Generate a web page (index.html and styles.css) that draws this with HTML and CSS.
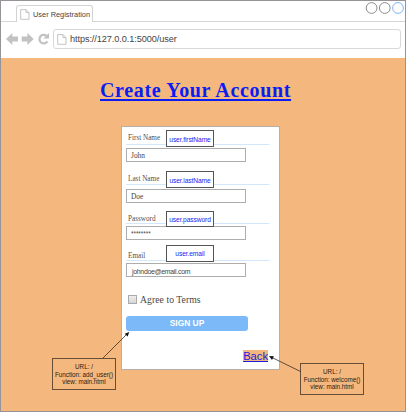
FILE: index.html
```html
<!DOCTYPE html>
<html lang="en">
<head>
<meta charset="utf-8">
<title>User Registration</title>
<link rel="stylesheet" href="styles.css">
</head>
<body>
<div class="window">
  <header class="chrome">
    <div class="tabs">
      <div class="tab">
        <svg class="doc" width="10" height="11" viewBox="0 0 10 11"><path d="M.7.6H6L9 3.6V10.3H.7ZM6 .6V3.6H9"/></svg>
        <span class="tab-title">User Registration</span>
      </div>
      <svg class="controls" width="40" height="14" viewBox="0 0 40 14"><circle cx="6.6" cy="7" r="5.4"/><circle cx="19.8" cy="7" r="5.4"/><circle class="active" cx="33" cy="7" r="5.4"/></svg>
    </div>
    <div class="toolbar">
      <svg class="nav" width="46" height="14" viewBox="0 0 46 14">
        <path d="M0 7L6.3 1V4.5H12V9.5H6.3V13Z"/>
        <path d="M27.7 7L21.4 1V4.5H15.7V9.5H21.4V13Z"/>
        <path class="reload" d="M41.4 9.4A4.3 4.3 0 1 1 40.6 3.9"/>
        <path d="M43 1V6.6H37.4Z"/>
      </svg>
      <div class="address">
        <svg class="doc" width="10" height="11" viewBox="0 0 10 11"><path d="M.7.6H6L9 3.6V10.3H.7ZM6 .6V3.6H9"/></svg>
        <span class="url">https://127.0.0.1:5000/user</span>
      </div>
    </div>
  </header>
  <main class="page">
    <h1><span class="heading">Create Your Account</span></h1>
    <form class="card">
      <div class="field">
        <div class="row"><label>First Name</label><span class="tag">user.firstName</span></div>
        <div class="input">John</div>
      </div>
      <div class="field last-name">
        <div class="row"><label>Last Name</label><span class="tag">user.lastName</span></div>
        <div class="input">Doe</div>
      </div>
      <div class="field password">
        <div class="row"><label>Password</label><span class="tag">user.password</span></div>
        <div class="input">********</div>
      </div>
      <div class="field email">
        <div class="row"><label>Email</label><span class="tag">user.email</span></div>
        <div class="input">johndoe@email.com</div>
      </div>
      <div class="terms"><span class="check"></span><span class="terms-text">Agree to Terms</span></div>
      <div class="submit">SIGN UP</div>
      <a class="back">Back</a>
    </form>
  </main>
  <div class="note note-signup">URL: /<br>Function: add_user()<br>view: main.html</div>
  <div class="note note-back">URL: /<br>Function: welcome()<br>view: main.html</div>
  <svg class="arrows" width="406" height="412" viewBox="0 0 406 412">
    <path class="line" d="M103 358L127 334M300.5 371.5L272 357.5"/>
    <path d="M129.3 332L127.6 336.6L124.7 333.7ZM269 356L273.9 356.2L272 359.9Z"/>
  </svg>
</div>
</body>
</html>
```
FILE: styles.css
```css
* { box-sizing: border-box; }
body { margin: 0; font-family: "Liberation Sans", Arial, sans-serif; }
.window {
  position: relative;
  width: 406px;
  height: 412px;
  overflow: hidden;
  border: 1px solid #969298;
  background: #f4b77d;
}
.chrome { height: 57px; background: #fff; }
.tabs {
  display: flex;
  justify-content: space-between;
  height: 21px;
  border-bottom: 1px solid #d6d6d6;
}
.tab {
  display: flex;
  align-items: center;
  width: 77px;
  height: 17px;
  margin: 4px 0 0 15px;
  padding-left: 3px;
  border: 1px solid #d3d3d3;
  border-bottom: 0;
  border-radius: 3px 3px 0 0;
  background: #fff;
}
.tab-title { margin-left: 3px; font-size: 7.4px; white-space: nowrap; color: #444; }
.doc { flex: none; fill: none; stroke: #bdbdbd; stroke-width: .9; }
.controls { fill: none; stroke: #8e8e8e; stroke-width: 1; }
.controls .active { stroke: #7fb5fa; }
.toolbar { display: flex; align-items: center; height: 36px; padding: 0 4px 2px 5px; }
.nav { flex: none; fill: #c2c2c2; }
.nav .reload { fill: none; stroke: #c2c2c2; stroke-width: 2.2; }
.address {
  display: flex;
  flex: 1;
  align-items: center;
  height: 20px;
  margin-left: 1px;
  padding-left: 3px;
  border: 1px solid #d8d8d8;
  border-radius: 3px;
}
.url { margin-left: 3px; font-size: 9.2px; letter-spacing: -.1px; color: #444; }
.page { display: flex; flex-direction: column; }
h1 {
  display: flex;
  height: 68px;
  margin: 0;
  padding: 19px 0 0 99px;
  font: bold 20px/26px "Liberation Serif", serif;
}
.heading {
  height: 26px;
  letter-spacing: .66px;
  white-space: nowrap;
  color: #0a1df2;
  text-decoration: underline;
  text-decoration-thickness: 1.5px;
  text-underline-offset: 2px;
}
.card {
  display: flex;
  flex-direction: column;
  width: 159px;
  height: 244px;
  margin-left: 120px;
  padding: 3px 5px 0 4px;
  border: 1px solid #b5b0aa;
  background: #fff;
}
.field { width: 143px; height: 41px; }
.last-name { height: 40px; }
.password { height: 34px; }
.row { display: flex; height: 15px; border-bottom: 1px solid #d3e7fc; }
label {
  width: 40px;
  padding-left: 2px;
  font: 7.2px/16px "Liberation Serif", serif;
  white-space: nowrap;
  color: #505050;
}
.tag {
  display: flex;
  align-items: center;
  justify-content: center;
  width: 48px;
  height: 17px;
  padding-top: 1px;
  border: 1px solid #555;
  background: #fff;
  font-size: 6.7px;
  letter-spacing: -.12px;
  white-space: nowrap;
  color: #1724f5;
}
.input {
  width: 120px;
  height: 14px;
  margin-top: 3px;
  padding-left: 4px;
  border: 1px solid #adadad;
  font: 7.4px/13px "Liberation Serif", serif;
  color: #444;
}
.last-name .row { height: 14px; }
.last-name .input { margin-top: 4px; padding-left: 4px; }
.password .row { height: 13px; }
.password .tag { height: 16px; padding-top: 0; }
.password .input { margin-top: 2px; font: 6.3px/14px "Liberation Sans", sans-serif; }
.email { height: 40px; }
.email .row { height: 16px; }
.email label { padding-top: 3px; }
.email .tag { padding-top: 0; }
.email .input { margin-top: 2px; padding-left: 5px; font: 6.9px/15px "Liberation Sans", sans-serif; letter-spacing: -.28px; }
.terms { display: flex; align-items: center; height: 14px; margin-top: 7px; padding-left: 2px; }
.check { width: 9px; height: 9px; border: 1px solid #aaa; background: linear-gradient(#eee, #d6d6d6); }
.terms-text { margin-left: 3px; font: 9.7px/13px "Liberation Serif", serif; letter-spacing: .05px; color: #484848; }
.submit {
  width: 122px;
  height: 15px;
  margin-top: 10px;
  border-radius: 3px;
  background: #7cb9f9;
  font: bold 8.4px/15px "Liberation Sans", sans-serif;
  text-align: center;
  color: #fff;
}
.back {
  align-self: flex-end;
  height: 12px;
  margin: 19px 6px 0 0;
  background: #f4b77d;
  font-size: 11.2px;
  line-height: 12px;
  color: #1a1ae0;
  text-decoration: underline;
  text-decoration-thickness: 1px;
}
.note {
  position: absolute;
  width: 64px;
  height: 32px;
  padding-top: 4px;
  border: 1px solid #684e36;
  font-size: 6.3px;
  line-height: 7.5px;
  text-align: center;
  white-space: nowrap;
  color: #2b1c10;
}
.note-signup { left: 51px; top: 357px; }
.note-back { left: 299px; top: 362px; }
.arrows { position: absolute; left: -1px; top: -1px; fill: #111; }
.arrows .line { fill: none; stroke: #3a3028; stroke-width: .8; }
```
